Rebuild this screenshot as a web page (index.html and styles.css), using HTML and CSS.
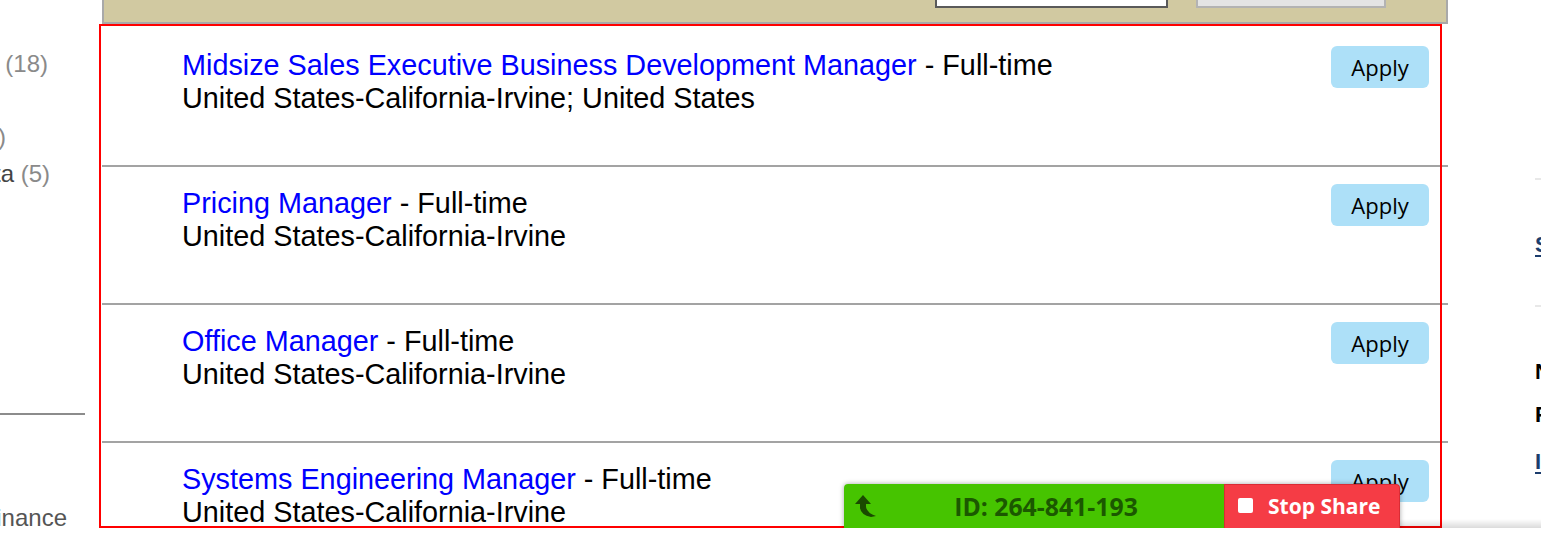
FILE: index.html
```html
<!DOCTYPE html>
<html lang="en">
<head>
<meta charset="utf-8">
<title>Job Listings</title>
<link rel="stylesheet" href="styles.css">
</head>
<body>
<div class="screen">
  <aside class="sidebar">
    <div class="sb-group">
      <div class="sb-item sb-end48"><span class="sb-name">Sales</span>&nbsp;<span class="sb-count">(18)</span></div>
      <div class="sb-item sb-end0"><span class="sb-name">Operations</span>&nbsp;<span class="sb-count">(3)</span></div>
      <div class="sb-item sb-end5"><span class="sb-name">Marketing</span>&nbsp;<span class="sb-count">(2)</span></div>
      <div class="sb-item sb-end49"><span class="sb-name">Engineering - Data</span>&nbsp;<span class="sb-count">(5)</span></div>
    </div>
    <div class="sb-rule"></div>
    <div class="sb-item sb-end68 sb-last"><span class="sb-name">Accounting &amp; Finance</span></div>
  </aside>

  <main class="main">
    <div class="searchbar">
      <div class="kw"><span>Keyword</span></div>
      <div class="search-btn"><span>Search Listings</span></div>
    </div>
    <div class="list">
      <div class="row">
        <div class="job">
          <div class="title"><a class="job-link" href="#">Midsize Sales Executive Business Development Manager</a> - Full-time</div>
          <div class="loc">United States-California-Irvine; United States</div>
        </div>
        <button class="apply">Apply</button>
      </div>
      <div class="row">
        <div class="job">
          <div class="title"><a class="job-link" href="#">Pricing Manager</a> - Full-time</div>
          <div class="loc">United States-California-Irvine</div>
        </div>
        <button class="apply">Apply</button>
      </div>
      <div class="row">
        <div class="job">
          <div class="title"><a class="job-link" href="#">Office Manager</a> - Full-time</div>
          <div class="loc">United States-California-Irvine</div>
        </div>
        <button class="apply">Apply</button>
      </div>
      <div class="row">
        <div class="job">
          <div class="title"><a class="job-link" href="#">Systems Engineering Manager</a> - Full-time</div>
          <div class="loc">United States-California-Irvine</div>
        </div>
        <button class="apply">Apply</button>
      </div>
    </div>
  </main>

  <aside class="rightcol">
    <div class="rc-rule rc-rule1"></div>
    <div class="rc-item rc-link rc-s">Share this job</div>
    <div class="rc-rule rc-rule2"></div>
    <div class="rc-item rc-n">New jobs</div>
    <div class="rc-item rc-f">Follow us</div>
    <div class="rc-item rc-link rc-i">Inside our company</div>
  </aside>

  <div class="redbox"></div>
  <div class="bottom-shadow"></div>

  <div class="sharebar">
    <div class="share-id">
      <svg class="share-arrow" width="24" height="24" viewBox="0 0 24 24" aria-hidden="true">
        <path d="M9 1 L1 10 L6 10 L6 14 Q7 21 17 23 L22 22 Q13 19 12 13 L12 10 L17 10 Z" fill="#1a4a00"/>
      </svg>
      <span class="id-text">ID: 264-841-193</span>
    </div>
    <div class="share-stop">
      <span class="stop-box"></span>
      <span class="stop-text">Stop Share</span>
    </div>
  </div>
</div>
</body>
</html>
```

FILE: styles.css
```css
html, body {
  margin: 0;
  padding: 0;
  background: #ffffff;
}

body {
  width: 1541px;
  height: 553px;
  overflow: hidden;
  font-family: "Liberation Sans", Arial, sans-serif;
}

.screen {
  position: relative;
  display: flex;
  align-items: flex-start;
  width: 1541px;
  height: 528px;
  overflow: hidden;
  background: #ffffff;
}

/* ---------- left sidebar ---------- */
.sidebar {
  width: 102px;
  flex: none;
  overflow: hidden;
  font-size: 24px;
  color: #444444;
}

.sb-group {
  padding-top: 46px;
}

.sb-item {
  display: flex;
  justify-content: flex-end;
  white-space: nowrap;
  height: 36.5px;
  line-height: 36.5px;
}

.sb-count {
  color: #8a8a8a;
}

.sb-end48 { width: 48px; }
.sb-end0 { width: 0px; }
.sb-end5 { width: 6px; }
.sb-end49 { width: 50px; }
.sb-end68 { width: 67px; }

.sb-rule {
  width: 85px;
  height: 2px;
  background: #8c8c8c;
  margin-top: 221px;
}

.sb-last {
  margin-top: 85px;
  color: #555555;
}

/* ---------- main column ---------- */
.main {
  width: 1346px;
  flex: none;
  display: flex;
  flex-direction: column;
}

.searchbar {
  flex: none;
  height: 22px;
  background: #d1c9a1;
  border: 2px solid #a9a9a9;
  border-top: none;
  display: flex;
  justify-content: flex-end;
  align-items: flex-start;
  gap: 28px;
  padding-right: 60px;
}

.kw {
  width: 229px;
  height: 36px;
  margin-top: -38px;
  background: #ffffff;
  border: 2px solid #5a5a5a;
  font-size: 20px;
  color: #333;
  text-align: center;
  padding-top: 6px;
  line-height: 23px;
  overflow: hidden;
}

.kw span {
  position: relative;
  left: 8px;
}

.search-btn {
  width: 186px;
  height: 36px;
  margin-top: -38px;
  background: #e4e4e4;
  border: 2px solid #b3b3b3;
  font-size: 20px;
  color: #555;
  text-align: center;
  padding-top: 6px;
  line-height: 23px;
  overflow: hidden;
}

.search-btn span {
  position: relative;
  left: 10px;
}

.list {
  flex: none;
  margin-top: 5px;
}

.row {
  display: flex;
  justify-content: space-between;
  align-items: flex-start;
  padding: 20px 19px 50px 80px;
  border-bottom: 2px solid #a3a3a3;
}

.job {
  font-size: 28.8px;
  line-height: 33px;
  color: #000000;
  white-space: nowrap;
}

.job-link {
  color: #0000ff;
  text-decoration: none;
}

.apply {
  width: 98px;
  height: 42px;
  margin-top: -3px;
  border: none;
  border-radius: 6px;
  background: #ade0f8;
  color: #000000;
  font-family: "Open Sans", "Noto Sans", sans-serif;
  font-size: 22px;
  line-height: 42px;
  padding: 0;
  flex: none;
}

/* ---------- right column ---------- */
.rightcol {
  flex: 1;
  overflow: hidden;
  padding-left: 87px;
  white-space: nowrap;
  font-size: 22px;
  font-weight: bold;
  line-height: 24px;
  color: #000000;
}

.rc-rule {
  height: 2px;
  background: #e8e8e8;
  width: 300px;
}

.rc-rule1 { margin-top: 178px; }
.rc-s { margin-top: 53px; }
.rc-rule2 { margin-top: 48px; }
.rc-n { margin-top: 53px; }
.rc-f { margin-top: 19px; }
.rc-i { margin-top: 23px; }

.rc-link {
  color: #1c3d6d;
  text-decoration: underline;
  text-underline-offset: 3px;
}

/* ---------- overlays ---------- */
.redbox {
  position: absolute;
  left: 99px;
  top: 24px;
  width: 1339px;
  height: 500px;
  border: 2px solid #ff0000;
  pointer-events: none;
}

.bottom-shadow {
  position: absolute;
  left: 1400px;
  top: 519px;
  width: 141px;
  height: 9px;
  background: linear-gradient(to bottom, rgba(0,0,0,0), rgba(0,0,0,0.14));
}

.sharebar {
  position: absolute;
  left: 844px;
  top: 484px;
  width: 556px;
  height: 46px;
  display: flex;
  border-radius: 4px 4px 0 0;
  box-shadow: 0 0 5px rgba(0, 0, 0, 0.35);
  font-family: "Open Sans", "Noto Sans", sans-serif;
  font-weight: bold;
}

.share-id {
  width: 380px;
  display: flex;
  align-items: flex-start;
  background: #46c400;
  border-radius: 4px 0 0 0;
  padding-left: 10px;
  box-sizing: border-box;
}

.share-arrow {
  margin-top: 10px;
  flex: none;
}

.id-text {
  flex: 1;
  text-align: center;
  color: #1b5800;
  font-size: 24.8px;
  line-height: 46px;
  margin-top: -1px;
  padding-right: 10px;
}

.share-stop {
  flex: 1;
  display: flex;
  align-items: flex-start;
  background: #f53c45;
  border: 1px solid #d92c35;
  border-bottom: none;
  border-radius: 0 4px 0 0;
  padding-left: 13px;
}

.stop-box {
  width: 15px;
  height: 15px;
  background: #ffffff;
  border-radius: 2px;
  margin-top: 13px;
  flex: none;
}

.stop-text {
  color: #ffffff;
  font-size: 21px;
  line-height: 44px;
  margin-left: 15px;
  margin-top: -1px;
}
```
